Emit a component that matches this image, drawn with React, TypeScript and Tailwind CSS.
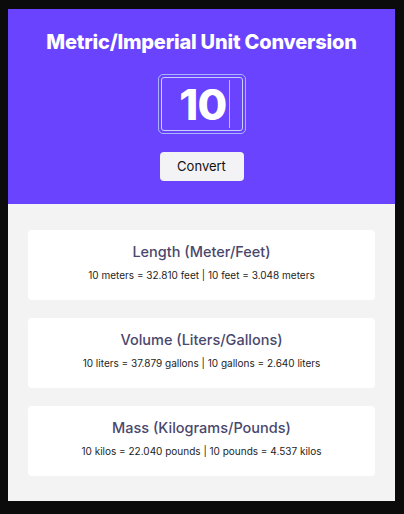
const results = [
  {
    title: 'Length (Meter/Feet)',
    text: '10 meters = 32.810 feet | 10 feet = 3.048 meters',
  },
  {
    title: 'Volume (Liters/Gallons)',
    text: '10 liters = 37.879 gallons | 10 gallons = 2.640 liters',
  },
  {
    title: 'Mass (Kilograms/Pounds)',
    text: '10 kilos = 22.040 pounds | 10 pounds = 4.537 kilos',
  },
]

export default function App() {
  return (
    <div className="w-[404px] h-[514px] bg-[#0b0b0b] pt-[9px] pl-[8px] font-['Inter',sans-serif]">
      <div className="w-[387px] h-[492px] bg-[#f3f3f3] flex flex-col">
        {/* Header */}
        <div className="h-[195px] bg-[#6a43fe] flex flex-col items-center pt-[21px]">
          <h1 className="text-[20px] font-extrabold text-white leading-[24px] tracking-[-0.2px]">
            Metric/Imperial Unit Conversion
          </h1>
          <div className="mt-[20px] w-[88px] h-[60px] rounded-[5px] border border-[#a9b4ff] p-[2px]">
            <div className="w-full h-full rounded-[3px] border border-[#c9d0ff] flex items-center justify-center">
              <span className="text-white text-[43px] font-extrabold leading-none tracking-[-0.5px] pl-[6px]">10</span>
              <span className="ml-[2px] w-px h-[48px] bg-[#c7b6ff]" />
            </div>
          </div>
          <button className="mt-[18px] w-[84px] h-[29px] rounded-[4px] bg-[#f3f2f5] text-[13px] text-[#111]">
            Convert
          </button>
        </div>

        {/* Results */}
        <div className="flex flex-col gap-[18px] px-[20px] pt-[26px]">
          {results.map((r) => (
            <div key={r.title} className="h-[70px] bg-white rounded-[4px] flex flex-col items-center pt-[12px]">
              <h2 className="text-[14.5px] font-medium text-[#4a476d] leading-[20px]">{r.title}</h2>
              <p className="mt-[7px] text-[10px] text-[#1d1d1d] leading-[13px]">{r.text}</p>
            </div>
          ))}
        </div>
      </div>
    </div>
  )
}
